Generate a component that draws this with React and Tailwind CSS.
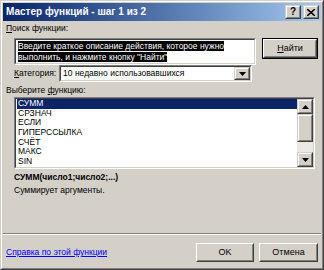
import React from "react";

const font = { fontFamily: "'Liberation Sans', Arial, sans-serif" };

function Sunken({ className = "", children }) {
  return (
    <div className={"border border-t-[#808080] border-l-[#808080] border-b-white border-r-white " + className}>
      <div className="border border-t-[#404040] border-l-[#404040] border-b-[#d4d0c8] border-r-[#d4d0c8] bg-white w-full h-full overflow-hidden">
        {children}
      </div>
    </div>
  );
}

function Btn({ className = "", children, isDefault = false }) {
  const inner = (
    <div className="border border-t-white border-l-white border-b-[#404040] border-r-[#404040] h-full">
      <div className="border border-t-[#d4d0c8] border-l-[#d4d0c8] border-b-[#808080] border-r-[#808080] h-full flex items-center justify-center text-[9px] text-black">
        {children}
      </div>
    </div>
  );
  if (isDefault) {
    return <div className={"border border-black " + className}>{inner}</div>;
  }
  return <div className={className}>{inner}</div>;
}

function Arrow({ dir }) {
  return (
    <svg width="7" height="4" viewBox="0 0 7 4">
      {dir === "up" ? <path d="M3.5 0 L7 4 L0 4 Z" fill="black" /> : <path d="M0 0 L7 0 L3.5 4 Z" fill="black" />}
    </svg>
  );
}

function SmallBtn({ className = "", children }) {
  return (
    <div className={"border border-t-[#d4d0c8] border-l-[#d4d0c8] border-b-[#404040] border-r-[#404040] " + className}>
      <div className="border border-t-white border-l-white border-b-[#808080] border-r-[#808080] w-full h-full flex items-center justify-center bg-[#d4d0c8]">
        {children}
      </div>
    </div>
  );
}

export default function App() {
  const items = ["СРЗНАЧ", "ЕСЛИ", "ГИПЕРССЫЛКА", "СЧЁТ", "МАКС", "SIN"];
  return (
    <div style={font} className="w-[324px] h-[270px] bg-[#d4d0c8] border border-t-[#d4d0c8] border-l-[#d4d0c8] border-b-[#404040] border-r-[#404040] text-[8.5px] text-black">
      <div className="w-full h-full border border-t-white border-l-white border-b-[#808080] border-r-[#808080] p-[1px] flex flex-col">
        {/* Title bar */}
        <div className="h-[18px] flex items-center justify-between pl-[3px] pr-[2px] bg-gradient-to-r from-[#0a246a] to-[#a6caf0]">
          <span className="text-white font-bold text-[10px] leading-none whitespace-nowrap">Мастер функций - шаг 1 из 2</span>
          <div className="flex items-center gap-[2px]">
            <SmallBtn className="w-[16px] h-[14px]"><span className="font-bold text-[10px] leading-none">?</span></SmallBtn>
            <SmallBtn className="w-[16px] h-[14px]">
              <svg width="8" height="7" viewBox="0 0 8 7"><path d="M0 0 L8 7 M8 0 L0 7" stroke="black" strokeWidth="1.6" /></svg>
            </SmallBtn>
          </div>
        </div>

        {/* Body */}
        <div className="flex-1 flex flex-col px-[3px]">
          <div className="mt-[1px] leading-[12px]"><span className="underline">П</span>оиск функции:</div>
          <div className="flex mt-[4px] gap-[6px]">
            <Sunken className="ml-[8px] w-[242px] h-[27px]">
              <div className="px-[2px] pt-[1px] leading-[11px] whitespace-nowrap">
                <span className="bg-black text-white">Введите краткое описание действия, которое нужно</span>
                <br />
                <span className="bg-black text-white">выполнить, и нажмите кнопку "Найти"</span>
              </div>
            </Sunken>
            <Btn isDefault className="w-[56px] h-[21px]"><span><span className="underline">Н</span>айти</span></Btn>
          </div>
          <div className="flex items-center mt-[0px] ml-[8px] gap-[3px]">
            <span className="whitespace-nowrap"><span className="underline">К</span>атегория:</span>
            <Sunken className="w-[193px] h-[17px]">
              <div className="flex h-full items-center">
                <span className="flex-1 pl-[2px] leading-none whitespace-nowrap">10 недавно использовавшихся</span>
                <SmallBtn className="w-[16px] h-full"><Arrow dir="down" /></SmallBtn>
              </div>
            </Sunken>
          </div>
          <div className="mt-[2px] leading-[12px]">Выберите <span className="underline">ф</span>ункцию:</div>
          <Sunken className="mt-[1px] ml-[8px] w-[301px] h-[72px]">
            <div className="flex h-full">
              <div className="flex-1 flex flex-col pt-[0px] pl-[1px] leading-[9.7px]">
                <div className="bg-[#0a246a] text-white pl-[1px] h-[9.7px]">СУММ</div>
                {items.map((t) => (
                  <div key={t} className="pl-[1px] h-[9.7px]">{t}</div>
                ))}
              </div>
              <div className="w-[16px] h-full flex flex-col bg-[#ebe9e4]">
                <SmallBtn className="w-[16px] h-[15px]"><Arrow dir="up" /></SmallBtn>
                <SmallBtn className="w-[16px] h-[28px]" />
                <div className="flex-1" />
                <SmallBtn className="w-[16px] h-[15px]"><Arrow dir="down" /></SmallBtn>
              </div>
            </div>
          </Sunken>
          <div className="mt-[2px] ml-[8px] font-bold leading-[12px]">СУММ(число1;число2;...)</div>
          <div className="mt-[1px] ml-[8px] leading-[12px]">Суммирует аргументы.</div>
          <div className="flex-1" />
          <div className="border-t border-t-[#808080] border-b border-b-white -mx-[3px]" />
          <div className="flex items-center justify-between mt-[8px] mb-[5px]">
            <span className="text-[#0000ff] underline">Справка по этой функции</span>
            <div className="flex gap-[5px]">
              <Btn className="w-[58px] h-[19px]">OK</Btn>
              <Btn className="w-[59px] h-[19px]">Отмена</Btn>
            </div>
          </div>
        </div>
      </div>
    </div>
  );
}
